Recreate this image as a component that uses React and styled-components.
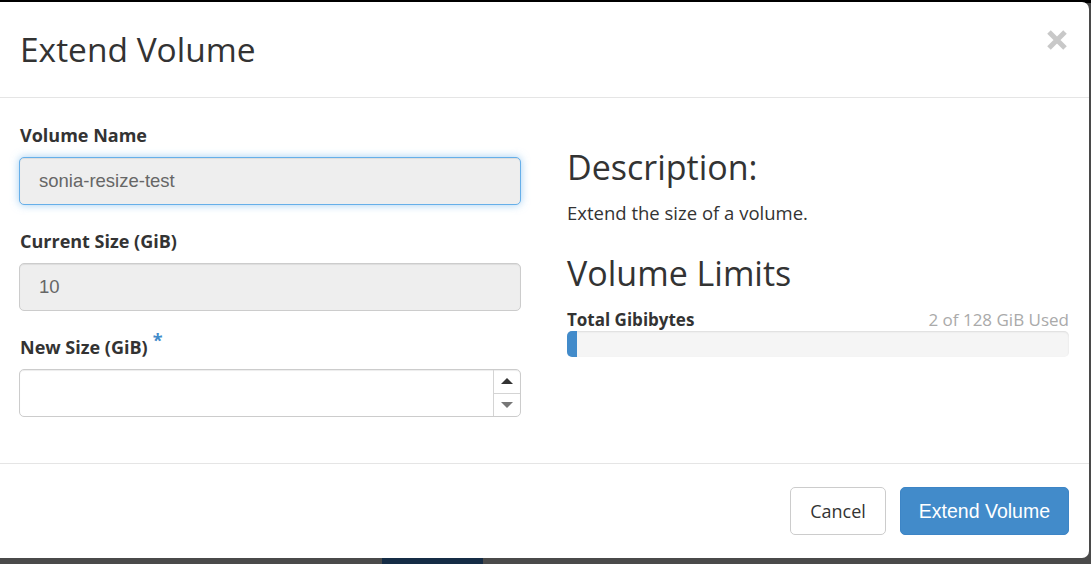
import React from "react";
import styled, { createGlobalStyle } from "styled-components";

const GlobalStyle = createGlobalStyle`
    html, body {
        margin: 0;
        padding: 0;
        background: #4a4a4a;
    }
    * {
        box-sizing: border-box;
    }
`;

const Backdrop = styled.div`
    width: 1091px;
    height: 564px;
    overflow: hidden;
    padding-top: 2px;
    background:
        linear-gradient(#152c45, #152c45) 382px 100% / 101px 6px no-repeat,
        linear-gradient(to bottom, #000 0 3px, #4a4a4a 3px);
    font-family: "Open Sans", "Noto Sans", sans-serif;
    color: #333;
`;

const Modal = styled.div`
    width: 1089px;
    height: 556px;
    background: #fff;
    border-radius: 0 7px 7px 0;
    display: flex;
    flex-direction: column;
`;

const Header = styled.div`
    height: 96px;
    padding: 0 20px;
    border-bottom: 1px solid #e5e5e5;
    display: flex;
    align-items: center;
    justify-content: space-between;
`;

const Title = styled.h4`
    margin: 0;
    font-size: 33.5px;
    font-weight: 400;
    line-height: 1.1;
    color: #333;
`;

const Close = styled.button`
    align-self: flex-start;
    margin-top: 27px;
    border: 0;
    background: none;
    padding: 0;
    margin-right: 1px;
    width: 22px;
    height: 22px;
    display: flex;
    align-items: center;
    justify-content: center;
    cursor: pointer;
`;

const Body = styled.div`
    flex: 1;
    display: flex;
    gap: 46px;
    padding: 25px 20px 0 19px;
`;

const LeftCol = styled.div`
    width: 502px;
    display: flex;
    flex-direction: column;
`;

const RightCol = styled.div`
    flex: 1;
    padding-top: 24px;
`;

const Field = styled.div`
    margin-bottom: 24px;
`;

const Label = styled.label`
    display: block;
    font-size: 18px;
    font-weight: 700;
    line-height: 24px;
    margin: 0 0 10px 1px;
    color: #333;
`;

const Required = styled.span`
    color: #428bca;
    font-size: 18px;
    line-height: 0;
    vertical-align: 7px;
    margin-left: 5px;
`;

const TextInput = styled.div`
    height: 48px;
    border-radius: 5px;
    border: 1px solid ${(p) => (p.$focus ? "#66afe9" : "#ccc")};
    background: ${(p) => (p.$disabled ? "#eee" : "#fff")};
    box-shadow: ${(p) =>
        p.$focus
            ? "inset 0 1px 1px rgba(0,0,0,.075), 0 0 8px rgba(102,175,233,.6)"
            : "inset 0 1px 1px rgba(0,0,0,.075)"};
    padding: 0 19px;
    display: flex;
    align-items: center;
    font-family: "Liberation Sans", Arial, sans-serif;
    font-size: 18.5px;
    color: #666;
`;

const NumberInput = styled.div`
    height: 48px;
    border-radius: 5px;
    border: 1px solid #ccc;
    background: #fff;
    box-shadow: inset 0 1px 1px rgba(0,0,0,.075);
    display: flex;
    overflow: hidden;
`;

const NumberValue = styled.div`
    flex: 1;
`;

const Spinner = styled.div`
    width: 27px;
    border-left: 1px solid #d4d4d4;
    display: flex;
    flex-direction: column;
`;

const SpinBtn = styled.div`
    flex: 1;
    display: flex;
    align-items: center;
    justify-content: center;
    border-top: ${(p) => (p.$down ? "1px solid #d4d4d4" : "0")};
    &::after {
        content: "";
        border-left: 6px solid transparent;
        border-right: 6px solid transparent;
        ${(p) =>
            p.$down
                ? "border-top: 6px solid #777;"
                : "border-bottom: 6px solid #333;"}
    }
`;

const Heading = styled.h3`
    margin: 0;
    font-size: 34px;
    font-weight: 400;
    line-height: 40px;
    color: #333;
`;

const Text = styled.p`
    margin: 14px 0 28px;
    font-size: 18.5px;
    line-height: 24px;
    color: #333;
`;

const QuotaRow = styled.div`
    margin-top: 16px;
    display: flex;
    justify-content: space-between;
    align-items: baseline;
    line-height: 22px;
`;

const QuotaName = styled.strong`
    font-size: 17px;
    font-weight: 700;
`;

const QuotaUsed = styled.span`
    font-size: 17px;
    color: #aaa;
`;

const Progress = styled.div`
    margin-top: 0;
    height: 26px;
    background: #f5f5f5;
    border-radius: 5px;
    box-shadow: inset 0 1px 2px rgba(0,0,0,.1);
    overflow: hidden;
    display: flex;
`;

const ProgressBar = styled.div`
    background: #428bca;
    height: 100%;
`;

const Footer = styled.div`
    height: 95px;
    border-top: 1px solid #e5e5e5;
    display: flex;
    justify-content: flex-end;
    align-items: center;
    gap: 14px;
    padding: 0 20px 0 0;
`;

const Button = styled.button`
    height: 48px;
    border-radius: 5px;
    padding: 0 ${(p) => (p.$primary ? "18px" : "19px")};
    font-size: ${(p) => (p.$primary ? "19.5px" : "18px")};
    cursor: pointer;
    border: 1px solid ${(p) => (p.$primary ? "#3d85c6" : "#ccc")};
    background: ${(p) => (p.$primary ? "#428bca" : "#fff")};
    color: ${(p) => (p.$primary ? "#fff" : "#333")};
    font-family: ${(p) =>
        p.$primary ? '"Liberation Sans", Arial, sans-serif' : '"Open Sans", "Noto Sans", sans-serif'};
`;

const CloseIcon = () => (
    <svg width="22" height="22" viewBox="0 0 22 22">
        <path d="M3 3 L19 19 M19 3 L3 19" stroke="#c8c8c8" strokeWidth="5" strokeLinecap="butt" />
    </svg>
);

export default function App() {
    const used = 2;
    const total = 128;
    return (
        <>
            <GlobalStyle />
            <Backdrop>
                <Modal>
                    <Header>
                        <Title>Extend Volume</Title>
                        <Close aria-label="Close">
                            <CloseIcon />
                        </Close>
                    </Header>
                    <Body>
                        <LeftCol>
                            <Field>
                                <Label>Volume Name</Label>
                                <TextInput $disabled $focus>sonia-resize-test</TextInput>
                            </Field>
                            <Field>
                                <Label>Current Size (GiB)</Label>
                                <TextInput $disabled>10</TextInput>
                            </Field>
                            <Field>
                                <Label>
                                    New Size (GiB)<Required>*</Required>
                                </Label>
                                <NumberInput>
                                    <NumberValue />
                                    <Spinner>
                                        <SpinBtn />
                                        <SpinBtn $down />
                                    </Spinner>
                                </NumberInput>
                            </Field>
                        </LeftCol>
                        <RightCol>
                            <Heading>Description:</Heading>
                            <Text>Extend the size of a volume.</Text>
                            <Heading>Volume Limits</Heading>
                            <QuotaRow>
                                <QuotaName>Total Gibibytes</QuotaName>
                                <QuotaUsed>
                                    {used} of {total} GiB Used
                                </QuotaUsed>
                            </QuotaRow>
                            <Progress>
                                <ProgressBar style={{ width: `${Math.max((used / total) * 100, 2)}%` }} />
                            </Progress>
                        </RightCol>
                    </Body>
                    <Footer>
                        <Button>Cancel</Button>
                        <Button $primary>Extend Volume</Button>
                    </Footer>
                </Modal>
            </Backdrop>
        </>
    );
}
